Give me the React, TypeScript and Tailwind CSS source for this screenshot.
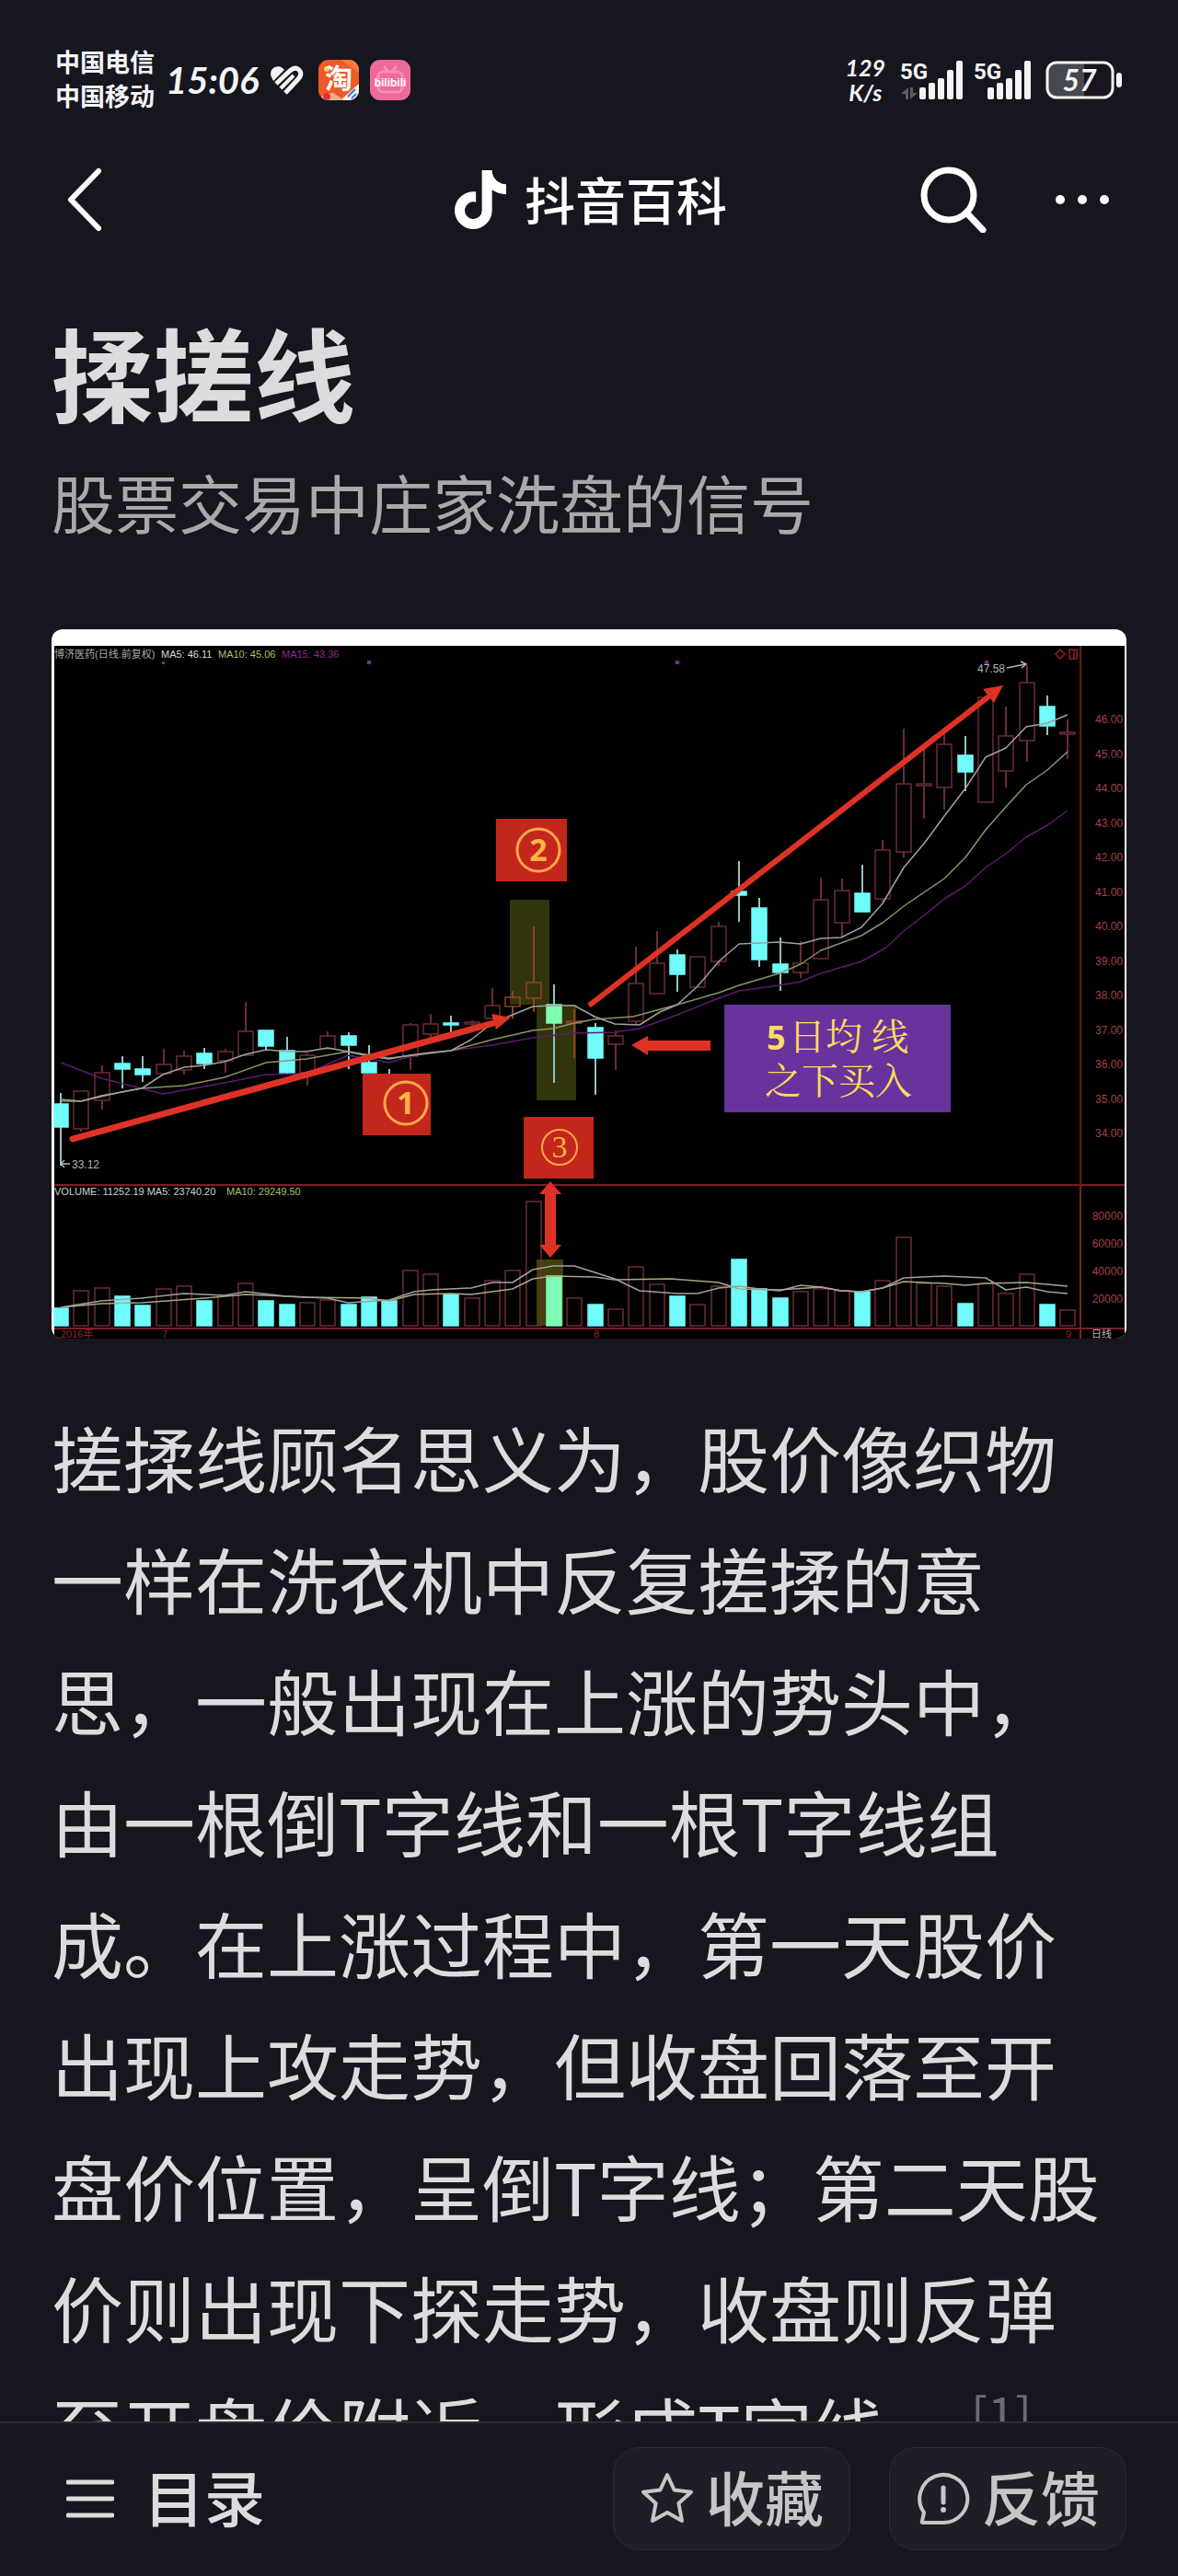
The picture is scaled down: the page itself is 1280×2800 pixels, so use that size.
import { FaTiktok } from "react-icons/fa6";

type Candle = {
  high: number;
  top: number;
  bottom: number;
  low: number;
  down?: boolean;
  vol: number;
};

const CYAN = "#6ffcfb";
const RED = "#6c2c36";

// [high, top, bottom, low, top of the volume bar, 1 = closed lower]
const rows = [
  [504, 516, 541, 583, 738, 1],
  [502, 502, 543, 546, 719, 0],
  [474, 482, 512, 522, 716, 0],
  [464, 472, 478, 499, 725, 1],
  [464, 478, 484, 492, 735, 1],
  [456, 473, 483, 483, 717, 0],
  [458, 464, 479, 484, 714, 0],
  [455, 461, 472, 478, 730, 1],
  [456, 459, 469, 482, 724, 0],
  [405, 437, 463, 464, 711, 0],
  [436, 436, 453, 458, 730, 1],
  [443, 458, 482, 483, 734, 1],
  [461, 463, 482, 496, 732, 0],
  [437, 442, 456, 456, 729, 0],
  [438, 442, 452, 478, 734, 1],
  [452, 471, 482, 482, 726, 1],
  [478, 484, 490, 490, 730, 1],
  [428, 430, 464, 479, 697, 0],
  [418, 429, 440, 444, 701, 0],
  [420, 428, 430, 439, 723, 1],
  [425, 427, 429, 431, 727, 0],
  [390, 409, 423, 424, 708, 0],
  [393, 400, 410, 423, 697, 0],
  [323, 384, 401, 416, 622, 0],
  [386, 408, 428, 493, 703, 1],
  [413, 426, 428, 466, 727, 0],
  [428, 433, 466, 506, 734, 1],
  [436, 442, 451, 479, 739, 0],
  [345, 385, 426, 429, 693, 0],
  [328, 363, 396, 396, 712, 0],
  [348, 354, 375, 394, 725, 1],
  [356, 356, 389, 389, 734, 0],
  [318, 323, 361, 366, 714, 0],
  [252, 285, 289, 318, 685, 1],
  [292, 303, 359, 367, 717, 1],
  [335, 364, 373, 393, 727, 1],
  [339, 363, 373, 379, 720, 0],
  [270, 294, 358, 358, 717, 0],
  [271, 284, 319, 335, 719, 0],
  [256, 287, 307, 307, 720, 1],
  [229, 240, 293, 296, 708, 0],
  [108, 168, 242, 248, 661, 0],
  [128, 168, 170, 206, 711, 0],
  [111, 125, 172, 196, 714, 0],
  [116, 137, 155, 176, 733, 1],
  [73, 74, 188, 188, 711, 0],
  [84, 116, 154, 172, 722, 0],
  [39, 58, 121, 144, 701, 0],
  [72, 84, 105, 115, 734, 1],
  [98, 112, 114, 141, 740, 0],
];

const candles: Candle[] = rows.map(([high, top, bottom, low, vol, down]) => ({
  high,
  top,
  bottom,
  low,
  vol,
  down: down === 1,
}));

const ma5 =
  "10,511 32,513 54,507 76,503 98,499 121,484 144,476 166,474 188,470 211,462 233,457 255,459 277,459 300,455 322,459 344,464 367,467 389,463 412,460 434,458 456,446 479,428 501,419 523,410 545,409 568,409 590,421 612,429 639,430 661,416 680,408 702,388 725,361 747,342 791,340 814,342 836,336 858,335 880,324 903,298 926,259 948,233 970,203 993,173 1015,139 1037,129 1059,106 1082,102 1104,93";
const ma10 =
  "10,513 32,513 54,508 76,503 98,499 144,496 188,487 233,471 277,467 322,459 367,466 394,463 434,458 479,446 523,436 545,434 568,428 590,424 632,421 680,408 725,395 747,387 791,374 814,364 836,349 880,333 903,319 926,301 970,271 993,248 1015,218 1037,193 1059,169 1082,153 1104,133";
const ma15 =
  "10,471 54,488 121,505 166,497 188,493 233,484 277,483 322,463 367,471 394,463 434,458 479,452 523,444 568,439 612,438 639,434 680,419 725,401 747,393 791,387 814,383 836,374 880,361 907,346 926,328 948,311 970,293 993,279 1015,259 1037,244 1059,226 1082,213 1104,197";
const vol5 =
  "10,737 54,730 98,727 144,722 188,724 211,720 255,725 300,727 322,732 367,729 394,720 412,718 456,716 479,710 501,710 523,696 545,692 568,692 612,706 639,719 680,722 702,722 725,716 747,714 769,717 791,719 814,713 836,715 858,719 880,720 903,716 926,705 970,703 1015,705 1037,718 1059,715 1082,720 1104,722";
const vol10 =
  "10,737 54,733 98,732 166,727 211,723 277,726 344,727 367,730 394,723 434,722 456,723 501,717 523,706 545,703 590,704 612,707 673,706 725,710 747,717 791,718 836,715 858,719 880,720 903,716 926,709 970,711 993,713 1015,711 1059,710 1104,714";

const prices = [46, 45, 44, 43, 42, 41, 40, 39, 38, 37, 36, 35, 34];
const volumes = [80000, 60000, 40000, 20000];

function Chart() {
  return (
    <svg
      viewBox="0 0 1168 771"
      className="block h-auto w-full rounded-xl bg-white font-['Liberation_Sans','Noto_Sans_CJK_SC',sans-serif]"
      role="img"
      aria-label="揉搓线 K线图"
      fontSize="12"
    >
      <rect x="3" y="18" width="1163" height="753" fill="#000" />

      {/* header line */}
      <g fontSize="11">
        <text x="3" y="31" fill="#a9a9a9">
          博济医药(日线.前复权)
        </text>
        <text x="119" y="31" fill="#dadada">
          MA5: 46.11
        </text>
        <text x="181" y="31" fill="#b5bb6c">
          MA10: 45.06
        </text>
        <text x="250" y="31" fill="#8e2a92">
          MA15: 43.36
        </text>
      </g>
      <g fill="#7c2a8c">
        <rect x="120" y="35" width="3" height="3" />
        <rect x="343" y="34" width="4" height="4" />
        <rect x="678" y="34" width="4" height="4" />
        <rect x="1014" y="34" width="4" height="4" />
      </g>

      {/* axes */}
      <g stroke="#7d1d26" strokeWidth="2" fill="none">
        <path d="M3 604H1166" />
        <path d="M3 760H1166" />
        <path d="M1118 604V771" />
        <path d="M1118 18V604" stroke="#5a1f16" />
        <path
          d="M1096 22l5 5-5 5-5-5zM1106 22h8v10h-8zM1111 22v10"
          stroke="#701820"
        />
      </g>
      <g fill="#a5404a" textAnchor="end">
        {prices.map((p, i) => (
          <text key={p} x="1164" y={102 + i * 37.5}>
            {p}.00
          </text>
        ))}
        {volumes.map((v, i) => (
          <text key={v} x="1164" y={642 + i * 30}>
            {v}
          </text>
        ))}
      </g>

      {/* highlighted zones */}
      <rect x="498" y="294" width="43" height="114" fill="#32340c" />
      <rect x="527" y="408" width="43" height="104" fill="#32340c" />
      <rect x="527" y="685" width="29" height="72" fill="#3f400c" />

      {candles.map((c, i) => {
        const x = Math.round(10 + i * 22.33);
        const marked = i === 24;
        const color = marked
          ? "#7dfcb4"
          : c.down
            ? CYAN
            : i === 23 || i === 22 || i === 25
              ? "#8f4420"
              : RED;
        const wick = c.down ? "#8fc4c2" : color;
        const left = i === 0 ? 3 : x - 8;
        const width = i === 0 ? 15 : 16;
        return (
          <g key={i}>
            <path
              d={`M${x} ${c.high}V${c.top}M${x} ${c.bottom}V${c.low}`}
              stroke={wick}
              strokeWidth="2"
            />
            <rect
              x={left}
              y={c.top}
              width={width}
              height={c.bottom - c.top}
              fill={c.down ? color : "none"}
              stroke={color}
              strokeWidth="1.5"
            />
            <rect
              x={left}
              y={c.vol}
              width={width}
              height={757 - c.vol}
              fill={c.down ? color : "none"}
              stroke={marked || c.down ? color : RED}
              strokeWidth="1.5"
            />
          </g>
        );
      })}

      <g fill="none" strokeWidth="1.5" strokeLinejoin="round">
        <polyline points={ma15} stroke="#5d1a72" />
        <polyline points={ma10} stroke="#8f9168" />
        <polyline points={ma5} stroke="#a0a0a0" />
        <polyline points={vol10} stroke="#a8a886" />
        <polyline points={vol5} stroke="#a0a0a0" />
      </g>

      {/* highest and lowest price */}
      <g fill="#b4b4b4" stroke="none">
        <text x="22" y="586">
          33.12
        </text>
        <text x="1006" y="47">
          47.58
        </text>
        <path
          d="M20 581H10M14 577l-4 4 4 4M1038 42l20-4M1053 35l6 3-5 4"
          fill="none"
          stroke="#b4b4b4"
          strokeWidth="1.5"
        />
      </g>

      <g fontSize="11">
        <text x="3" y="615" fill="#cfcfcf">
          VOLUME: 11252.19 MA5: 23740.20
        </text>
        <text x="190" y="615" fill="#b5bb6c">
          MA10: 29249.50
        </text>
      </g>
      <g fill="#8e2a30" fontSize="11">
        <text x="10" y="770">
          2016年
        </text>
        <text x="120" y="770">
          7
        </text>
        <text x="589" y="770">
          8
        </text>
        <text x="1102" y="770">
          9
        </text>
        <text x="1130" y="770" fill="#b4b4b4">
          日线
        </text>
      </g>

      {/* arrows */}
      <g fill="#df3226" stroke="#df3226">
        <path d="M23 554L484 427" strokeWidth="7" strokeLinecap="round" />
        <path d="M499 422l-16 13-5-17z" stroke="none" />
        <path d="M584 409L1021 71" strokeWidth="6" />
        <path d="M1034 61l-10 19-12-15z" stroke="none" />
        <path d="M630 452l18-10v5h68v11h-68v5z" stroke="none" />
        <path
          d="M542 600l12 14h-6v55h6l-12 14-12-14h6v-55h-6z"
          stroke="none"
        />
      </g>

      {/* numbered labels */}
      <g fill="#c3271b">
        <rect x="338" y="483" width="74" height="67" />
        <rect x="483" y="206" width="77" height="68" />
        <rect x="513" y="530" width="76" height="67" />
      </g>
      <g fill="none" stroke="#ffa64d" strokeWidth="3">
        <circle cx="385" cy="515" r="23" />
        <circle cx="529" cy="240" r="23" />
        <circle cx="552" cy="563" r="19" strokeWidth="2" />
      </g>
      <g fill="#ffb347" textAnchor="middle" fontSize="34">
        <g
          className="font-['Noto_Sans','Open_Sans',sans-serif]"
          fontWeight="700"
        >
          <text x="385" y="527">
            1
          </text>
          <text x="529" y="252">
            2
          </text>
        </g>
        <text x="552" y="574" className="font-['Liberation_Serif',serif]">
          3
        </text>
      </g>

      <rect x="731" y="408" width="246" height="117" fill="#68339c" />
      <g
        fill="#ffdc5e"
        fontSize="40"
        className="font-['Noto_Serif_CJK_SC','Noto_Sans_CJK_SC',sans-serif]"
      >
        <text
          x="777"
          y="457"
          fontWeight="700"
          className="font-['Noto_Sans','Open_Sans',sans-serif]"
          fontSize="36"
        >
          5
        </text>
        <text x="801" y="457">
          日均 线
        </text>
        <text x="775" y="505">
          之下买入
        </text>
      </g>
    </svg>
  );
}

// first SIM also shows the data arrows under its label
function Signal({ data }: { data?: boolean }) {
  const start = data ? 21 : 15;
  const bars = [13, 18, 23, 32, 42];
  return (
    <svg
      viewBox={data ? "0 0 68 44" : "0 0 62 44"}
      className={
        data
          ? "h-11 w-[68px] overflow-visible font-['Roboto',sans-serif]"
          : "h-11 w-[62px] overflow-visible font-['Roboto',sans-serif]"
      }
      fill="#f4f4f5"
    >
      <text x="0" y="21" fontSize="24" fontWeight="700">
        5G
      </text>
      {data && <path d="M9 30v13H6v-6H1zM11 43V30h3v6h5z" fill="#5a5a62" />}
      {bars.map((h, i) => (
        <rect
          key={h}
          x={start + i * 10}
          y={43 - h}
          width="7"
          height={h}
          rx="2"
        />
      ))}
    </svg>
  );
}

function StatusBar() {
  return (
    <div className="flex items-center px-[60px] pt-12 text-[#f4f4f5]">
      <div className="pb-1 text-[27px] leading-[37px] font-bold">
        <p>中国电信</p>
        <p>中国移动</p>
      </div>
      <time className="ml-3 w-[104px] font-['Lato','Liberation_Sans',sans-serif] text-[40px] leading-[48px] font-bold italic">
        15:06
      </time>
      <svg viewBox="0 0 38 34" className="ml-2 h-[34px] w-[38px]" fill="none">
        <path d="M3 14C-1 5 9-1 15 4l2 2L5 18z" fill="#f4f4f5" />
        <path
          d="M8 21L23 7q6-5 10-1t-1 10L18 31"
          stroke="#f4f4f5"
          strokeWidth="5"
        />
        <path d="M13 26L27 12" stroke="#f4f4f5" strokeWidth="4" />
      </svg>
      <svg viewBox="0 0 44 44" className="ml-4 size-11 overflow-visible">
        <clipPath id="taobao">
          <rect width="44" height="44" rx="11" />
        </clipPath>
        <g clipPath="url(#taobao)">
          <rect width="44" height="44" fill="#ee5a28" />
          <path d="M24 0h20v14z" fill="#f47b3c" />
          <path d="M44 26v18H24z" fill="#f6f0ea" />
          <path d="M0 44l6-7 10-1 12 8z" fill="#e8b08a" />
          <circle cx="9" cy="40" r="4" fill="#e0313a" />
          <path d="M32 40l8-8M36 42l5-5" stroke="#3f7be0" strokeWidth="2" />
          <circle cx="9" cy="10" r="3" fill="#ffd24a" />
        </g>
        <text x="7" y="31" fontSize="30" fontWeight="700" fill="#fff">
          淘
        </text>
      </svg>
      <svg viewBox="0 0 44 44" className="ml-3 size-11">
        <rect width="44" height="44" rx="11" fill="#ee6a9b" />
        <g fill="none" stroke="#f58fb5" strokeWidth="3" strokeLinecap="round">
          <rect x="9" y="13" width="26" height="22" rx="5" />
          <path d="M16 8l3 4M28 8l-3 4" />
        </g>
        <text
          x="22"
          y="29"
          fontSize="12"
          fontWeight="700"
          textAnchor="middle"
          fill="#fff"
          className="font-['Liberation_Sans',sans-serif]"
        >
          bilibili
        </text>
      </svg>

      <div className="ml-auto text-center font-['Lato','Liberation_Sans',sans-serif] text-[25px] leading-[27px] font-bold italic">
        <p>129</p>
        <p>K/s</p>
      </div>
      <div className="ml-4 flex gap-3">
        <Signal data />
        <Signal />
      </div>
      <svg viewBox="0 0 84 44" className="ml-4 h-11 w-[84px]">
        <rect x="3" y="4" width="39" height="36" rx="8" fill="#47474f" />
        <rect x="32" y="4" width="10" height="36" fill="#47474f" />
        <rect
          x="2"
          y="3"
          width="71"
          height="38"
          rx="10"
          fill="none"
          stroke="#f4f4f5"
          strokeWidth="3"
        />
        <rect x="77" y="14" width="6" height="16" rx="3" fill="#f4f4f5" />
        <text
          x="37"
          y="34"
          fontSize="32"
          fontWeight="700"
          fontStyle="italic"
          textAnchor="middle"
          fill="#f4f4f5"
          className="font-['Lato','Liberation_Sans',sans-serif]"
        >
          57
        </text>
      </svg>
    </div>
  );
}

function NavBar() {
  return (
    <header className="mt-[55px] grid grid-cols-[1fr_auto_1fr] items-center px-[72px] text-white">
      <button aria-label="返回" className="justify-self-start">
        <svg viewBox="0 0 40 72" className="h-[72px] w-10" fill="none">
          <path
            d="M35 5L5 36l30 31"
            stroke="currentColor"
            strokeWidth="6"
            strokeLinecap="round"
            strokeLinejoin="round"
          />
        </svg>
      </button>
      <div className="flex items-center gap-5 pl-1">
        <FaTiktok className="h-16 w-14" />
        <span className="pb-1 text-[55px] leading-[68px] font-medium">
          抖音百科
        </span>
      </div>
      <div className="flex items-center gap-[72px] justify-self-end">
        <button aria-label="搜索">
          <svg viewBox="0 0 72 72" className="size-[72px]" fill="none">
            <circle
              cx="31"
              cy="31"
              r="27"
              stroke="currentColor"
              strokeWidth="7"
            />
            <path
              d="M50 50l18 19"
              stroke="currentColor"
              strokeWidth="7"
              strokeLinecap="round"
            />
          </svg>
        </button>
        <button aria-label="更多">
          <svg viewBox="0 0 64 72" className="h-[72px] w-16" fill="currentColor">
            <circle cx="8" cy="36" r="5" />
            <circle cx="32" cy="36" r="5" />
            <circle cx="56" cy="36" r="5" />
          </svg>
        </button>
      </div>
    </header>
  );
}

function Footer() {
  return (
    <footer className="flex shrink-0 items-center justify-between border-t-2 border-[#2e2e36] px-14 pt-[26px] pb-7 text-[64px] leading-[72px] font-medium">
      <button className="flex items-center gap-8 pl-4 text-[#dcdcde]">
        <svg viewBox="0 0 52 44" className="h-11 w-[52px]">
          <path
            d="M2 4h48M2 22h48M2 40h48"
            stroke="currentColor"
            strokeWidth="5"
            strokeLinecap="round"
          />
        </svg>
        <span className="pb-2 text-[66px]">目录</span>
      </button>
      <div className="flex gap-[42px] text-[#c6c6c9]">
        <button className="flex h-28 items-center gap-3 rounded-[28px] border border-[#2c2c34] bg-[#1e1e27] px-7">
          <svg viewBox="0 0 60 60" className="size-[60px]" fill="none">
            <path
              d="M30 4L37.600 20.500L56 22.700L42.400 35L46 54L30 45L14 54L17.600 35L4 22.700L22.400 20.500z"
              stroke="currentColor"
              strokeWidth="4"
              strokeLinejoin="round"
            />
          </svg>
          <span className="pb-2">收藏</span>
        </button>
        <button className="flex h-28 items-center gap-3 rounded-[28px] border border-[#2c2c34] bg-[#1e1e27] px-7">
          <svg viewBox="0 0 60 60" className="size-[60px]" fill="none">
            <path
              d="M7 54l2-9A26 26 0 1 1 30 56H8q-2 0-1-2z"
              stroke="currentColor"
              strokeWidth="4"
              strokeLinejoin="round"
            />
            <path
              d="M30 18v16"
              stroke="currentColor"
              strokeWidth="5"
              strokeLinecap="round"
            />
            <circle cx="30" cy="42" r="3" fill="currentColor" />
          </svg>
          <span className="pb-2">反馈</span>
        </button>
      </div>
    </footer>
  );
}

export default function App() {
  return (
    <div
      lang="zh-CN"
      className="flex h-screen flex-col bg-[#16161f] font-['Noto_Sans_CJK_SC',sans-serif]"
    >
      <StatusBar />
      <NavBar />
      <main className="min-h-0 flex-1 overflow-y-auto px-14 pt-[90px] [scrollbar-width:none]">
        <h1 className="text-[110px] leading-[120px] font-bold text-[#dcdcde]">
          揉搓线
        </h1>
        <p className="mt-[42px] text-[69px] leading-[80px] text-[#a9a9ac]">
          股票交易中庄家洗盘的信号
        </p>
        <figure className="mt-[99px]">
          <Chart />
        </figure>
        <p className="mt-[62px] text-[78px] leading-[132px] text-[#dcdcde]">
          搓揉线顾名思义为，股价像织物一样在洗衣机中反复搓揉的意思，一般出现在上涨的势头中，由一根倒T字线和一根T字线组成。在上涨过程中，第一天股价出现上攻走势，但收盘回落至开盘价位置，呈倒T字线；第二天股价则出现下探走势，收盘则反弹至开盘价附近，形成T字线。
          <sup className="ml-4 text-[54px] text-[#6b6b71]">
            <a href="#ref-1">[1]</a>
          </sup>
        </p>
      </main>
      <Footer />
    </div>
  );
}
